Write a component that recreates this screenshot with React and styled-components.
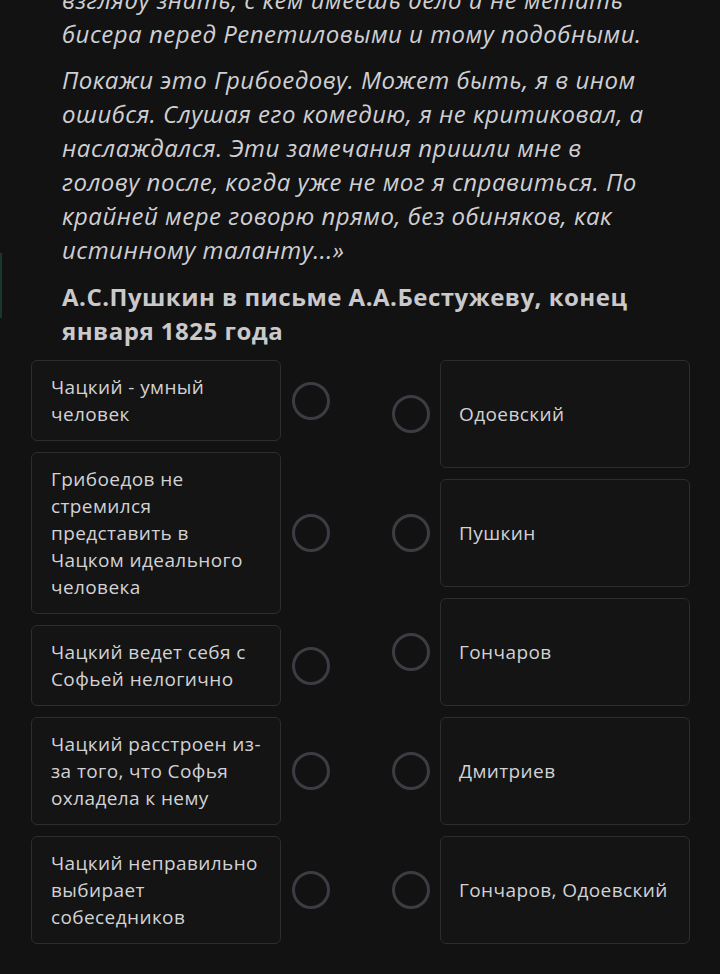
import React from "react";
import styled, { createGlobalStyle } from "styled-components";

const colors = {
  bg: "#121212",
  card: "#141414",
  border: "#2d2d2f",
  text: "#d2d2d4",
  ring: "#3c3c42",
  rail: "#16382e",
};

const GlobalStyle = createGlobalStyle`
  html, body {
    margin: 0;
    padding: 0;
    background: ${colors.bg};
  }
  body {
    font-family: "Open Sans", "Noto Sans", sans-serif;
    color: ${colors.text};
    overflow: hidden;
  }
`;

const Page = styled.div`
  width: 720px;
  height: 974px;
  overflow: hidden;
  background: ${colors.bg};
`;

const Article = styled.div`
  display: flex;
  margin-top: -17px;
`;

const Rail = styled.div`
  flex: 0 0 2px;
  height: 65px;
  margin-top: 270px;
  background: ${colors.rail};
`;

const TextColumn = styled.div`
  display: flex;
  flex-direction: column;
  gap: 12px;
  width: 596px;
  margin-left: 60px;
`;

const Quote = styled.p`
  margin: 0;
  font-style: italic;
  font-size: 24px;
  line-height: 34px;
  letter-spacing: 0.5px;
  color: #cfcfd3;
`;

const Source = styled.h3`
  margin: 1px 0 0;
  font-size: 24px;
  line-height: 34px;
  letter-spacing: 0.5px;
  font-weight: 700;
  color: #c9c9cc;
`;

const Matching = styled.div`
  display: grid;
  grid-template-columns: 1fr 1fr;
  column-gap: 62px;
  padding: 12px 31px 0;
`;

const Column = styled.div`
  display: flex;
  flex-direction: column;
  gap: 11px;
`;

const Row = styled.div`
  display: flex;
  align-items: center;
  gap: ${(p) => (p.$reverse ? "10px" : "11px")};
  flex-direction: ${(p) => (p.$reverse ? "row-reverse" : "row")};
  justify-content: ${(p) => (p.$reverse ? "flex-end" : "flex-start")};
`;

const Card = styled.div`
  box-sizing: border-box;
  width: 250px;
  flex: 0 0 250px;
  display: flex;
  align-items: center;
  min-height: ${(p) => (p.$tall ? "108px" : "0")};
  padding: 12.5px 16px 12.5px ${(p) => (p.$tall ? "18px" : "19px")};
  background: ${colors.card};
  border: 1px solid ${colors.border};
  border-radius: 6px;
  font-size: 19px;
  line-height: 27px;
  letter-spacing: 0.4px;
  color: ${colors.text};
`;

const Radio = styled.span`
  box-sizing: border-box;
  flex: 0 0 38px;
  width: 38px;
  height: 38px;
  border-radius: 50%;
  border: 3px solid ${colors.ring};
`;

const left = [
  "Чацкий - умный человек",
  "Грибоедов не стремился представить в Чацком идеального человека",
  "Чацкий ведет себя с Софьей нелогично",
  "Чацкий расстроен из-за того, что Софья охладела к нему",
  "Чацкий неправильно выбирает собеседников",
];

const right = ["Одоевский", "Пушкин", "Гончаров", "Дмитриев", "Гончаров, Одоевский"];

export default function App() {
  return (
    <Page>
      <GlobalStyle />
      <Article>
        <Rail />
        <TextColumn>
          <Quote>
            взгляду знать, с кем имеешь дело и не метать бисера перед
            Репетиловыми и тому подобными.
          </Quote>
          <Quote>
            Покажи это Грибоедову. Может быть, я в ином ошибся. Слушая его
            комедию, я не критиковал, а наслаждался. Эти замечания пришли мне в
            голову после, когда уже не мог я справиться. По крайней мере говорю
            прямо, без обиняков, как истинному таланту...»
          </Quote>
          <Source>А.С.Пушкин в письме А.А.Бестужеву, конец января 1825 года</Source>
        </TextColumn>
      </Article>
      <Matching>
        <Column>
          {left.map((t) => (
            <Row key={t}>
              <Card>{t}</Card>
              <Radio />
            </Row>
          ))}
        </Column>
        <Column>
          {right.map((t) => (
            <Row key={t} $reverse>
              <Card $tall>{t}</Card>
              <Radio />
            </Row>
          ))}
        </Column>
      </Matching>
    </Page>
  );
}
